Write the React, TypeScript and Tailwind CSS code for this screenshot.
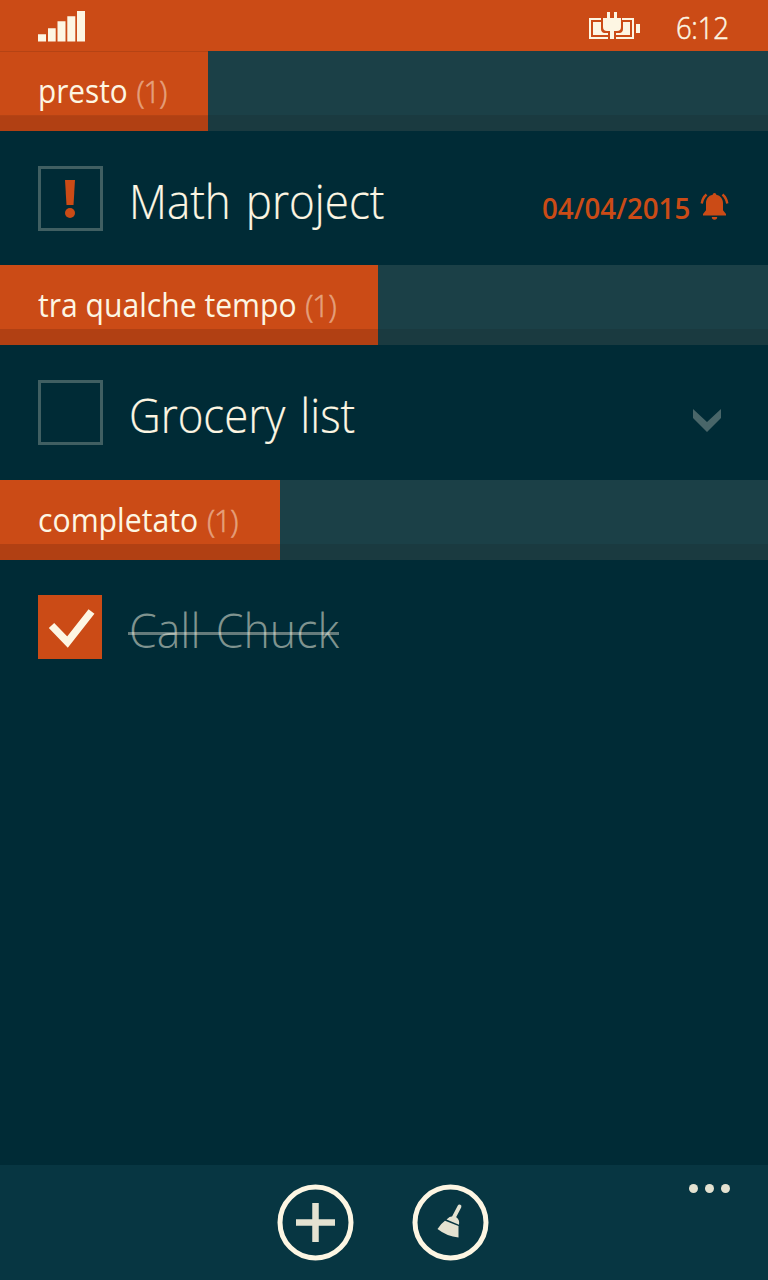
import type { ReactNode } from "react";

function SectionHeader({ title, count, width, scale }: { title: string; count: number; width: string; scale: string }) {
  return (
    <header className="flex h-20 shrink-0 flex-col bg-[#1b4047]">
      <div className="flex h-16">
        <div className={`flex h-16 shrink-0 bg-[#cb4b16] pl-[38px] pt-2 ${width}`}>
          <h2 className={`origin-left whitespace-nowrap text-[32px] leading-[64px] ${scale}`}>
            {title}{" "}
            <span className="ml-[1px] font-light tracking-[-1.200px] text-[#e5a07d] [-webkit-text-stroke:0.600px_#e5a07d]">({count})</span>
          </h2>
        </div>
      </div>
      <div className="flex h-4 bg-[#1a3a40]">
        <div className={`h-4 shrink-0 bg-[#b14013] ${width}`} />
      </div>
    </header>
  );
}

function Checkbox({ children }: { children?: ReactNode }) {
  return (
    <div className="mt-[35px] flex size-[65px] shrink-0 items-center justify-center border-[3px] border-[#405f62]">
      {children}
    </div>
  );
}

function Bell() {
  return (
    <svg className="mt-[60px] ml-[10px] h-[30px] w-[30px]" viewBox="0 0 30 30" fill="#cb4b16">
      <path d="M14.5 2a1.8 1.8 0 0 1 1.8 1.7C20.600 4.500 23 8 23 12v7.300l3 3.800v1.500H3v-1.500l3-3.800V12c0-4 2.400-7.500 6.700-8.300A1.800 1.800 0 0 1 14.500 2ZM11.800 26h5.400a2.700 2.700 0 0 1-5.400 0Z" />
      <path d="M6.500 3.500Q2.500 7 1.700 12.500M22.500 3.500Q26.500 7 27.300 12.500" fill="none" stroke="#cb4b16" strokeWidth="2.400" />
    </svg>
  );
}

function StatusBar() {
  return (
    <div className="flex h-[51px] shrink-0 justify-between bg-[#cb4b16] pl-[38px] pr-10">
      <svg className="mt-[10px] h-8 w-12" viewBox="0 0 48 32" fill="#fdf6e3">
        <path d="M0 24.300h8V31.500H0ZM10 18.300h7.700V31.500H10ZM19.500 11.300h8V31.500h-8ZM29.300 6.300h8V31.500h-8ZM39 1h8V31.500h-8Z" />
      </svg>
      <div className="flex">
        <svg className="mt-[11px] mr-[35px] h-[30px] w-[51px]" viewBox="0 0 51 30" fill="#fdf6e3">
          <path d="M0 7h12v2H2v17h17v2H0ZM33 7h12v21H27v-2h16V9H33ZM47 13h4v9h-4Z" />
          <path d="M4 11h8v7q0 3 3 4h4v2H4ZM34 11h7v13H27v-2h4q3-1 3-4Z" />
          <path d="M18 1h3v6h4V1h3v6h4v9q0 4-4 4h-3v8h-4v-8h-3q-4 0-4-4V7h4Z" />
        </svg>
        <time className="w-[53px] origin-left scale-x-[0.89] whitespace-nowrap pl-[1px] pt-[1px] text-[31px] font-light leading-[52px] tracking-[-0.300px] [-webkit-text-stroke:0.500px_#fdf6e3]">6:12</time>
      </div>
    </div>
  );
}

export default function App() {
  return (
    <div className="flex h-[1280px] w-[768px] flex-col overflow-hidden bg-[#002b36] font-['Open_Sans','Noto_Sans',sans-serif] text-[#fdf6e3]">
      <StatusBar />
      <main className="flex flex-1 flex-col">
        <section>
          <SectionHeader title="presto" count={1} width="w-[208px] shadow-[inset_0_1px_0_#b54314]" scale="scale-x-[0.930]" />
          <div className="flex h-[134px] pl-[38px] pr-[38px]">
            <Checkbox>
              <svg className="-ml-[1px] mt-[1px] h-10 w-3" viewBox="0 0 12 40" fill="#cb4b16">
                <path d="M1 1h10L9.500 26h-7Z" />
                <circle cx="6" cy="34" r="5" />
              </svg>
            </Checkbox>
            <span className="ml-[26px] mt-[3px] h-[134px] origin-left scale-x-[0.915] whitespace-nowrap text-[48px] font-light leading-[134px] [-webkit-text-stroke:0.200px_#fdf6e3] [word-spacing:4px]">Math project</span>
            <div className="ml-auto flex text-[#cb4b16]">
              <time className="mt-[10px] h-[134px] origin-right scale-x-[0.955] whitespace-nowrap text-[29px] font-semibold leading-[134px]">04/04/2015</time>
              <Bell />
            </div>
          </div>
        </section>
        <section>
          <SectionHeader title="tra qualche tempo" count={1} width="w-[378px]" scale="scale-x-[0.941]" />
          <div className="flex h-[135px] pl-[38px] pr-[46px]">
            <Checkbox />
            <span className="ml-[26px] mt-[3px] h-[134px] origin-left scale-x-[0.912] whitespace-nowrap text-[48px] font-light leading-[134px] [-webkit-text-stroke:0.200px_#fdf6e3] [word-spacing:4px]">Grocery list</span>
            <svg className="ml-auto mt-[64px] h-6 w-[30px]" viewBox="0 0 30 24" fill="#496669">
              <path d="M1 0 15 13 29 0V9L15 23 1 9Z" />
            </svg>
          </div>
        </section>
        <section>
          <SectionHeader title="completato" count={1} width="w-[280px]" scale="scale-x-[0.944]" />
          <div className="flex h-[134px] pl-[38px]">
            <div className="mt-[35px] flex size-16 shrink-0 items-center justify-center bg-[#cb4b16]">
              <svg className="h-16 w-16" viewBox="0 0 64 64" fill="none" stroke="#fdf6e3" strokeWidth="7.500">
                <path d="m13.500 30.500 16 16.500L53.500 16.500" />
              </svg>
            </div>
            <div className="relative ml-[26px]">
              <span className="block origin-left scale-x-[0.930] whitespace-nowrap pl-[1px] pt-[3px] text-[48px] font-light leading-[134px] text-[#7f938f] [word-spacing:4px]">Call Chuck</span>
              <div className="absolute left-0 top-[72px] h-[3px] w-[211px] bg-[#fdf6e3]/40" />
            </div>
          </div>
        </section>
      </main>
      <footer className="flex h-[115px] shrink-0 bg-[#073642] pl-[277px] pr-[38px]">
        <button className="mt-[19px] size-[77px]">
          <svg viewBox="0 0 77 77" fill="none">
            <circle cx="38.500" cy="38.500" r="35.500" stroke="#fdf6e3" strokeWidth="5" />
            <path d="M38.500 19v39M19 38.500h39" stroke="#e4e2d1" strokeWidth="6.500" />
          </svg>
        </button>
        <button className="ml-[58px] mt-[19px] size-[77px]">
          <svg viewBox="0 0 77 77" fill="none">
            <circle cx="38.500" cy="38.500" r="35.500" stroke="#fdf6e3" strokeWidth="5" />
            <path d="M47.500 22.500 42 33" stroke="#e4e2d1" strokeWidth="3.800" strokeLinecap="round" />
            <path d="M34.500 35.500q4.500-5 9.500-2.500 4 2.500 3 7.800ZM33 36.800 46.500 42V53.500Q35 52.500 25.500 45q3-5 7.500-8.200Z" fill="#e4e2d1" />
          </svg>
        </button>
        <div className="ml-auto mt-[19px] flex h-[9px] gap-[7px]">
          <i className="size-[9px] rounded-full bg-[#e4e2d1]" />
          <i className="size-[9px] rounded-full bg-[#e4e2d1]" />
          <i className="size-[9px] rounded-full bg-[#e4e2d1]" />
        </div>
      </footer>
    </div>
  );
}
